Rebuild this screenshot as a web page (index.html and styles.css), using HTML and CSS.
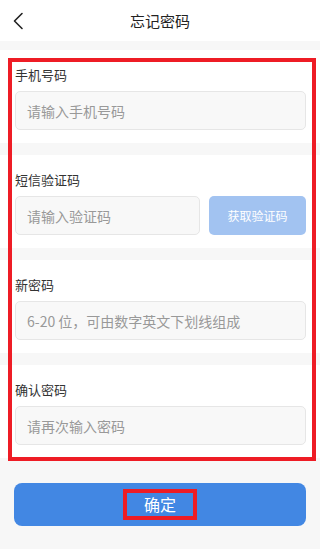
FILE: index.html
```html
<!DOCTYPE html>
<html lang="zh-CN">
  <head>
    <meta charset="UTF-8" />
    <meta name="viewport" content="width=device-width, initial-scale=1.0" />
    <title>忘记密码</title>
    <link rel="stylesheet" href="styles.css">
  </head>
  <body>
    <div class="page">
      <header class="nav-bar">
        <span class="back">
          <svg width="12" height="18" viewBox="0 0 12 18">
            <path d="M10 1.5 L2.5 9 L10 16.5" fill="none" stroke="#222" stroke-width="1.6" stroke-linecap="round" stroke-linejoin="round" />
          </svg>
        </span>
        <h1 class="nav-title">忘记密码</h1>
      </header>

      <form class="reset-form">
        <div class="form-group">
          <label>手机号码</label>
          <input type="text" placeholder="请输入手机号码" />
        </div>
        <div class="form-group">
          <label>短信验证码</label>
          <div class="code-row">
            <input type="text" placeholder="请输入验证码" />
            <button type="button" class="code-btn">获取验证码</button>
          </div>
        </div>
        <div class="form-group">
          <label>新密码</label>
          <input type="password" placeholder="6-20 位，可由数字英文下划线组成" />
        </div>
        <div class="form-group">
          <label>确认密码</label>
          <input type="password" placeholder="请再次输入密码" />
        </div>

        <div class="submit-wrap">
          <button type="submit" class="submit-btn"><span class="submit-text">确定</span></button>
        </div>
      </form>

      <!-- annotation boxes -->
      <div class="mark mark-form"></div>
    </div>
  </body>
</html>
```

FILE: styles.css
```css
/* Global Styles */
* {
  box-sizing: border-box;
  margin: 0;
  padding: 0;
}
body {
  font-family: "Noto Sans CJK SC", "Noto Sans", sans-serif;
  background-color: #f7f7f7;
  width: 320px;
  height: 549px;
  overflow: hidden;
}
.page {
  position: relative;
  height: 100%;
}
/* Nav Bar */
.nav-bar {
  position: relative;
  height: 41px;
  background-color: #fff;
  display: flex;
  align-items: center;
  justify-content: center;
}
.back {
  position: absolute;
  left: 12px;
  top: 12px;
  display: flex;
}
.nav-title {
  font-size: 15px;
  font-weight: normal;
  color: #222;
}
/* Form */
.reset-form {
  display: flex;
  flex-direction: column;
  gap: 12px;
  padding-top: 9px;
}
.form-group {
  background-color: #fff;
  padding: 16px 14px 13px 15px;
  display: flex;
  flex-direction: column;
  gap: 7px;
}
.form-group label {
  font-size: 13px;
  line-height: 18px;
  color: #333;
}
.form-group input {
  width: 100%;
  height: 39px;
  padding: 0 11px;
  border: 1px solid #e6e6e6;
  border-radius: 5px;
  background-color: #f8f8f8;
  font-family: inherit;
  font-size: 14px;
  color: #333;
  outline: none;
}
.form-group input::placeholder {
  color: #999;
}
.code-row {
  display: flex;
  gap: 9px;
}
.code-row input {
  flex: 1;
}
.code-btn {
  width: 97px;
  flex-shrink: 0;
  height: 39px;
  border: none;
  border-radius: 5px;
  background-color: #a2c3f1;
  color: #fff;
  font-family: inherit;
  font-size: 12px;
}
/* Submit */
.submit-wrap {
  padding: 13px 14px 0;
}
.submit-btn {
  width: 100%;
  height: 43px;
  border: none;
  border-radius: 8px;
  background-color: #4287e3;
  color: #fff;
  font-family: inherit;
  font-size: 16px;
  display: flex;
  align-items: center;
  justify-content: center;
}
.submit-text {
  display: inline-block;
  width: 74px;
  height: 31px;
  line-height: 23px;
  border: 4px solid #ee1c25;
  text-align: center;
}
/* Annotation */
.mark {
  position: absolute;
  border: 4px solid #ee1c25;
  pointer-events: none;
}
.mark-form {
  left: 8px;
  top: 58px;
  width: 308px;
  height: 403px;
}
```
